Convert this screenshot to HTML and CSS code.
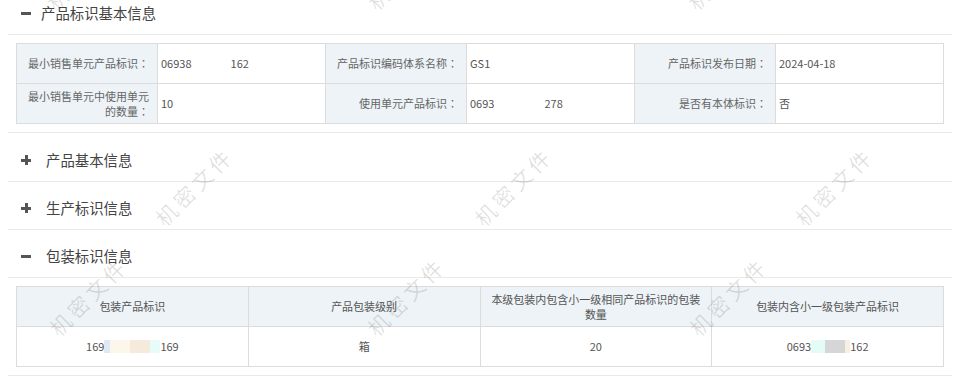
FILE: index.html
```html
<!DOCTYPE html>
<html lang="zh-CN">
<head>
    <meta charset="UTF-8">
    <meta name="viewport" content="width=device-width, initial-scale=1.0">
    <title>产品标识信息</title>
    <link rel="stylesheet" href="styles.css">
</head>
<body>
    <div class="page">
        <!-- 产品标识基本信息 -->
        <div class="section">
            <div class="sec-head first">
                <span class="toggle minus"></span>
                <span class="sec-title">产品标识基本信息</span>
            </div>
            <div class="sec-body">
                <table class="info">
                    <colgroup>
                        <col class="c-label"><col class="c-value">
                        <col class="c-label"><col class="c-value">
                        <col class="c-label"><col class="c-value">
                    </colgroup>
                    <tr>
                        <th>最小销售单元产品标识<span class="colon">：</span></th>
                        <td>06938<span class="gap gap-a"></span>162</td>
                        <th>产品标识编码体系名称<span class="colon">：</span></th>
                        <td>GS1</td>
                        <th>产品标识发布日期<span class="colon">：</span></th>
                        <td>2024-04-18</td>
                    </tr>
                    <tr>
                        <th>最小销售单元中使用单元的数量<span class="colon">：</span></th>
                        <td>10</td>
                        <th>使用单元产品标识<span class="colon">：</span></th>
                        <td>0693<span class="gap gap-b"></span>278</td>
                        <th>是否有本体标识<span class="colon">：</span></th>
                        <td>否</td>
                    </tr>
                </table>
            </div>
        </div>

        <div class="section">
            <div class="sec-head">
                <span class="toggle plus"></span>
                <span class="sec-title">产品基本信息</span>
            </div>
        </div>

        <div class="section">
            <div class="sec-head">
                <span class="toggle plus"></span>
                <span class="sec-title">生产标识信息</span>
            </div>
        </div>

        <!-- 包装标识信息 -->
        <div class="section">
            <div class="sec-head">
                <span class="toggle minus"></span>
                <span class="sec-title">包装标识信息</span>
            </div>
            <div class="sec-body">
                <table class="pack">
                    <tr>
                        <th>包装产品标识</th>
                        <th>产品包装级别</th>
                        <th>本级包装内包含小一级相同产品标识的包装数量</th>
                        <th>包装内含小一级包装产品标识</th>
                    </tr>
                    <tr>
                        <td>169<span class="blot b-blue"></span><span class="blot b-cream"></span><span class="blot b-peach"></span><span class="blot b-cyan"></span>169</td>
                        <td>箱</td>
                        <td>20</td>
                        <td>0693<span class="blot b-mint"></span><span class="blot b-gray"></span><span class="blot b-sand"></span>162</td>
                    </tr>
                </table>
            </div>
        </div>
    </div>

    <div class="watermarks">
        <span class="wm wm-a1">机密文件</span>
        <span class="wm wm-a2">机密文件</span>
        <span class="wm wm-a3">机密文件</span>
        <span class="wm wm-b1">机密文件</span>
        <span class="wm wm-b2">机密文件</span>
        <span class="wm wm-b3">机密文件</span>
        <span class="wm wm-c1">机密文件</span>
        <span class="wm wm-c2">机密文件</span>
        <span class="wm wm-c3">机密文件</span>
    </div>
</body>
</html>
```

FILE: styles.css
```css
body {
    margin: 0;
    font-family: "Microsoft YaHei", "Noto Sans CJK SC", sans-serif;
    background: #fff;
    position: relative;
    overflow: hidden;
}
.page {
    width: 944px;
    margin: -13px 0 0 8px;
}
.sec-head {
    display: flex;
    align-items: center;
    height: 48px;
    box-sizing: border-box;
    padding: 4px 0 0 13px;
    border-bottom: 1px solid #e9e9e9;
}
.sec-title {
    font-size: 14.4px;
    line-height: 18px;
    color: #444;
}
.toggle {
    position: relative;
    width: 10px;
    height: 10px;
    margin-right: 15px;
}
.sec-head.first .toggle {
    margin-right: 10px;
}
.toggle::before {
    content: "";
    position: absolute;
    left: 0;
    top: 4px;
    width: 10px;
    height: 3px;
    background: #555;
}
.toggle.plus::after {
    content: "";
    position: absolute;
    left: 4px;
    top: 0;
    width: 3px;
    height: 10px;
    background: #555;
}
.sec-body {
    padding: 8px;
    margin-bottom: 1px;
    border-bottom: 1px solid #e9e9e9;
}

table {
    width: 100%;
    border-collapse: collapse;
    table-layout: fixed;
    font-size: 11px;
    line-height: 14.3px;
}
th, td {
    height: 39px;
    border: 1px solid #dcdcdc;
    font-weight: normal;
}
.c-label {
    width: 141px;
}
.c-value {
    width: 168px;
}
.info th {
    background: #edf3f7;
    color: #666;
    text-align: right;
    padding: 0 8px;
}
.info td {
    color: #555;
    text-align: left;
    padding: 0 3px;
}
/* centred full-width colon, as on the original page */
.colon {
    font-family: "Noto Sans CJK JP", sans-serif;
    font-feature-settings: "locl" 0;
}
.pack th {
    background: #edf3f7;
    color: #555;
    padding: 0 8px;
    text-align: center;
}
.pack td {
    color: #555;
    text-align: center;
    padding: 0 8px;
}

/* masked parts of ids */
.gap {
    display: inline-block;
    height: 1px;
}
.gap-a {
    width: 39px;
}
.gap-b {
    width: 50px;
}
.blot {
    display: inline-block;
    height: 13px;
    vertical-align: -2px;
}
.b-blue { width: 6px; background: #dfe9f5; }
.b-cream { width: 20px; background: #fdf6ea; }
.b-peach { width: 20px; background: #f6eadd; }
.b-cyan { width: 10px; background: #e6fcfa; }
.b-mint { width: 14px; background: #e3fcf5; }
.b-gray { width: 20px; background: #d6d6d6; }
.b-sand { width: 5px; background: #f7efe4; }

/* watermark */
.watermarks {
    position: absolute;
    top: 0;
    left: 0;
    width: 100%;
    height: 384px;
    overflow: hidden;
    pointer-events: none;
}
.wm {
    position: absolute;
    font-size: 21px;
    line-height: 21px;
    letter-spacing: 4px;
    padding-left: 4px;
    color: rgba(0, 0, 0, 0.12);
    white-space: nowrap;
    transform: translate(-50%, -50%) rotate(-45deg);
}
.wm-a1 { left: 84px; top: -28px; }
.wm-a2 { left: 405px; top: -28px; }
.wm-a3 { left: 725px; top: -28px; }
.wm-b1 { left: 193px; top: 188px; }
.wm-b2 { left: 512px; top: 188px; }
.wm-b3 { left: 833px; top: 188px; }
.wm-c1 { left: 87px; top: 298px; }
.wm-c2 { left: 405px; top: 298px; }
.wm-c3 { left: 727px; top: 298px; }
```
